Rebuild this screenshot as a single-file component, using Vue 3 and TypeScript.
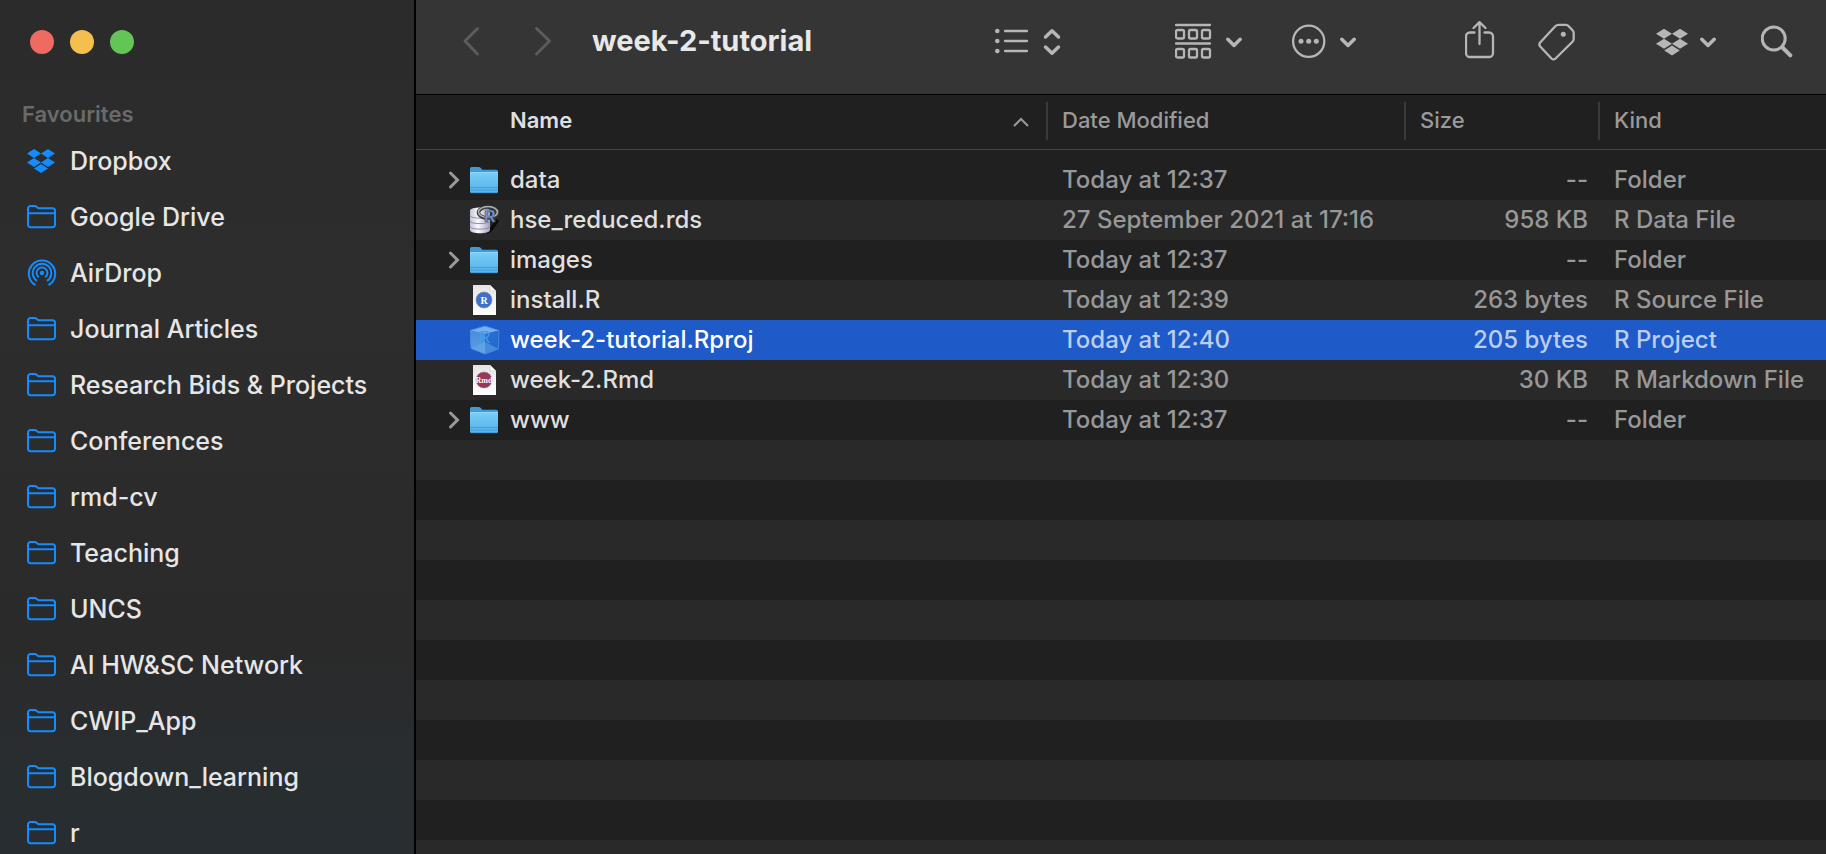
<script setup lang="ts">
import { ref } from 'vue'

type IconName = 'dropbox' | 'folder' | 'airdrop'
type FileIcon = 'folder' | 'rdata' | 'rsource' | 'rproj' | 'rmd'

interface Favourite {
  label: string
  icon: IconName
}

interface FileRow {
  name: string
  icon: FileIcon
  modified: string
  size: string
  kind: string
}

const favourites: Favourite[] = [
  { label: 'Dropbox', icon: 'dropbox' },
  { label: 'Google Drive', icon: 'folder' },
  { label: 'AirDrop', icon: 'airdrop' },
  { label: 'Journal Articles', icon: 'folder' },
  { label: 'Research Bids & Projects', icon: 'folder' },
  { label: 'Conferences', icon: 'folder' },
  { label: 'rmd-cv', icon: 'folder' },
  { label: 'Teaching', icon: 'folder' },
  { label: 'UNCS', icon: 'folder' },
  { label: 'AI HW&SC Network', icon: 'folder' },
  { label: 'CWIP_App', icon: 'folder' },
  { label: 'Blogdown_learning', icon: 'folder' },
  { label: 'r', icon: 'folder' },
]

const files: FileRow[] = [
  { name: 'data', icon: 'folder', modified: 'Today at 12:37', size: '--', kind: 'Folder' },
  { name: 'hse_reduced.rds', icon: 'rdata', modified: '27 September 2021 at 17:16', size: '958 KB', kind: 'R Data File' },
  { name: 'images', icon: 'folder', modified: 'Today at 12:37', size: '--', kind: 'Folder' },
  { name: 'install.R', icon: 'rsource', modified: 'Today at 12:39', size: '263 bytes', kind: 'R Source File' },
  { name: 'week-2-tutorial.Rproj', icon: 'rproj', modified: 'Today at 12:40', size: '205 bytes', kind: 'R Project' },
  { name: 'week-2.Rmd', icon: 'rmd', modified: 'Today at 12:30', size: '30 KB', kind: 'R Markdown File' },
  { name: 'www', icon: 'folder', modified: 'Today at 12:37', size: '--', kind: 'Folder' },
]

const selected = ref('week-2-tutorial.Rproj')
</script>

<template>
  <div class="window">
    <svg class="defs" aria-hidden="true">
      <defs>
        <linearGradient id="folder-front" x1="0" y1="0" x2="0" y2="1">
          <stop offset="0" stop-color="#7acdf8" />
          <stop offset="1" stop-color="#54b2ea" />
        </linearGradient>
        <linearGradient id="drum" x1="0" y1="0" x2="1" y2="0">
          <stop offset="0" stop-color="#c4c4d6" />
          <stop offset="0.4" stop-color="#fafaff" />
          <stop offset="1" stop-color="#a0a0bc" />
        </linearGradient>
        <linearGradient id="paper" x1="0" y1="0" x2="0" y2="1">
          <stop offset="0" stop-color="#e4e4e4" />
          <stop offset="1" stop-color="#ffffff" />
        </linearGradient>
        <linearGradient id="cube-left" x1="0" y1="0" x2="0" y2="1">
          <stop offset="0" stop-color="#4a8edc" />
          <stop offset="1" stop-color="#5b9fe3" />
        </linearGradient>
        <linearGradient id="cube-right" x1="0" y1="0" x2="1" y2="1">
          <stop offset="0" stop-color="#2a6fd0" />
          <stop offset="1" stop-color="#2468cc" />
        </linearGradient>
      </defs>
    </svg>

    <aside class="sidebar">
      <div class="lights">
        <button class="light close" aria-label="Close"></button>
        <button class="light minimise" aria-label="Minimise"></button>
        <button class="light zoom" aria-label="Zoom"></button>
      </div>
      <h2 class="section">Favourites</h2>
      <nav class="favourites">
        <a v-for="item in favourites" :key="item.label" class="favourite" href="#">
          <svg v-if="item.icon === 'dropbox'" class="side-icon" viewBox="0 0 30 28" aria-hidden="true">
            <path
              fill="#148cff"
              d="M7 2l7 4.5-7 4.5-7-4.5zM21 2l7 4.5-7 4.5-7-4.5zM7 11l7 4.5L7 20l-7-4.5zM21 11l7 4.5-7 4.5-7-4.5zM14 17l7 4.5-7 4.5-7-4.5z"
            />
          </svg>
          <svg v-else-if="item.icon === 'folder'" class="side-icon outline" viewBox="0 0 30 28" aria-hidden="true">
            <path d="M1 8.500V5.500a2.500 2.500 0 0 1 2.500-2.500h4.500c1.500 0 2.200 2.300 4 2.300h13.500a2.500 2.500 0 0 1 2.500 2.500v14a2.500 2.500 0 0 1-2.500 2.500h-22a2.500 2.500 0 0 1-2.500-2.500zM1 10.300h27" />
          </svg>
          <svg v-else class="side-icon outline" viewBox="0 0 30 28" aria-hidden="true">
            <circle cx="15" cy="14" r="1.200" fill="#148cff" />
            <path d="M8.500 26.200a13.200 13.200 0 1 1 13 0M10 21.800a9.300 9.300 0 1 1 10 0M11.800 18.300a5.400 5.400 0 1 1 6.400 0" />
          </svg>
          <span>{{ item.label }}</span>
        </a>
      </nav>
    </aside>

    <main class="content">
      <header class="toolbar">
        <button class="tool nav back" aria-label="Back">
          <svg width="18" height="40" viewBox="0 0 18 40"><path d="M15.500 7.500L3 20l12.500 13" /></svg>
        </button>
        <button class="tool nav forward" aria-label="Forward">
          <svg width="18" height="40" viewBox="0 0 18 40"><path d="M2.500 7.500L15.500 20 2.500 33" /></svg>
        </button>
        <h1 class="title">week-2-tutorial</h1>

        <button class="tool view" aria-label="List view">
          <svg width="66" height="40" viewBox="0 0 66 40">
            <path class="medium" d="M10 10h22M10 20h22M10 30h22" />
            <g class="solid"><circle cx="2.300" cy="10" r="2.300" /><circle cx="2.300" cy="20" r="2.300" /><circle cx="2.300" cy="30" r="2.300" /></g>
            <path class="heavy" d="M50.500 16L57 9.800l6.500 6.200M50.500 26L57 32.200l6.500-6.200" />
          </svg>
        </button>
        <button class="tool group" aria-label="Group items">
          <svg width="68" height="40" viewBox="0 0 68 40">
            <path class="medium" d="M1 4h34M1 22.500h34" />
            <g class="medium">
              <rect x="1" y="9" width="8" height="8.500" rx="1.500" /><rect x="14" y="9" width="8" height="8.500" rx="1.500" /><rect x="27" y="9" width="8" height="8.500" rx="1.500" />
              <rect x="1" y="28" width="8" height="8.500" rx="1.500" /><rect x="14" y="28" width="8" height="8.500" rx="1.500" /><rect x="27" y="28" width="8" height="8.500" rx="1.500" />
            </g>
            <path class="heavy" d="M52.800 18.300L59 24.500l6.200-6.200" />
          </svg>
        </button>
        <button class="tool action" aria-label="Actions">
          <svg width="64" height="40" viewBox="0 0 64 40">
            <circle class="medium" cx="16.700" cy="20.300" r="15.600" />
            <g class="solid"><circle cx="9" cy="20.300" r="2.500" /><circle cx="16.700" cy="20.300" r="2.500" /><circle cx="24.300" cy="20.300" r="2.500" /></g>
            <path class="heavy" d="M49.800 18.300L56 24.500l6.200-6.200" />
          </svg>
        </button>
        <button class="tool share" aria-label="Share">
          <svg width="30" height="40" viewBox="0 0 30 40">
            <path class="medium" d="M9.500 11.500H5a4 4 0 0 0-4 4V32a4 4 0 0 0 4 4h19a4 4 0 0 0 4-4V15.500a4 4 0 0 0-4-4h-4.500M14.500 23V1.500M8.500 7l6-5.800 6 5.800" />
          </svg>
        </button>
        <button class="tool tag" aria-label="Tags">
          <svg width="38" height="40" viewBox="0 0 38 40">
            <path class="medium" d="M17.500 5Q18.700 3.800 20.500 3.800H28Q29.500 3.800 30.500 5L34.500 9.200Q35.700 10.500 35.700 12V18Q35.700 19.500 34.500 20.700L17.500 37.500Q15.500 39.300 13.500 37.500L2.200 25.500Q0.500 23.500 2.200 21.600Z" />
            <circle class="solid" cx="25.300" cy="13.300" r="2.500" />
          </svg>
        </button>
        <button class="tool dropbox" aria-label="Dropbox">
          <svg width="60" height="40" viewBox="0 0 60 40">
            <path
              class="solid"
              d="M8 7.800l8 5-8 5-8-5zM24 7.800l8 5-8 5-8-5zM8 17.800l8 5-8 5-8-5zM24 17.800l8 5-8 5-8-5zM16 24.600l7.800 5-7.800 5-7.800-5z"
            />
            <path class="heavy" d="M45.800 18.300L52 24.500l6.200-6.200" />
          </svg>
        </button>
        <button class="tool search" aria-label="Search">
          <svg width="32" height="40" viewBox="0 0 32 40">
            <circle class="glass" cx="12.700" cy="17.500" r="11.500" />
            <path class="handle" d="M21.500 26.500l7.800 7.800" />
          </svg>
        </button>
      </header>

      <table class="files">
        <colgroup>
          <col />
          <col class="col-date" />
          <col class="col-size" />
          <col class="col-kind" />
        </colgroup>
        <thead>
          <tr>
            <th scope="col" class="sorted" aria-sort="ascending">
              <div class="head">
                <span>Name</span>
                <svg width="18" height="12" viewBox="0 0 18 12" aria-hidden="true"><path d="M2 11l7-7 7 7" /></svg>
              </div>
            </th>
            <th scope="col"><div class="head">Date Modified</div></th>
            <th scope="col"><div class="head">Size</div></th>
            <th scope="col"><div class="head">Kind</div></th>
          </tr>
        </thead>
        <tbody>
          <tr v-for="file in files" :key="file.name" :class="{ selected: file.name === selected }" @click="selected = file.name">
            <td>
              <div class="name">
                <button v-if="file.icon === 'folder'" class="disclosure" :aria-label="'Expand ' + file.name">
                  <svg width="16" height="24" viewBox="0 0 16 24"><path d="M4.500 5l7 7-7 7" /></svg>
                </button>
                <span v-else class="disclosure"></span>
                <svg class="file-icon" viewBox="0 0 30 30" aria-hidden="true">
                  <template v-if="file.icon === 'folder'">
                    <path fill="#3d9bd6" d="M0 3.500Q0 2 1.500 2H8.500Q10 2 11 3.200L12.500 4.700H26.500Q28 4.700 28 6.200V12H0z" />
                    <path fill="url(#folder-front)" d="M0 7.500H28V26.500Q28 28 26.500 28H1.500Q0 28 0 26.500z" />
                    <path stroke="#8fd8fb" d="M0 7.500h28" />
                    <path stroke="#3f97d0" stroke-width="0.800" d="M0 22.500h28M0 25h28M1 27.700h26" />
                  </template>
                  <template v-else-if="file.icon === 'rdata'">
                    <path fill="#050505" opacity="0.850" d="M17 26L27 14l2 2-7 10-5 3z" />
                    <path fill="url(#drum)" d="M0 5.500C0 1.500 20 1.500 20 5.500V25C20 29.300 0 29.300 0 25z" />
                    <path fill="none" stroke="#8d8da6" d="M0 10.500c0 3.500 20 3.500 20 0M0 16c0 3.500 20 3.500 20 0M0 21.500c0 3.500 20 3.500 20 0" />
                    <ellipse cx="18" cy="7.500" rx="9.500" ry="5.500" fill="none" stroke="#383b3e" stroke-width="3.600" />
                    <ellipse cx="18" cy="7" rx="9.500" ry="5.500" fill="none" stroke="#aeb2b3" stroke-width="1.600" />
                    <text x="14" y="16.500" class="glyph" font-size="16" fill="#7f98cf" stroke="#42557f" stroke-width="0.600">R</text>
                  </template>
                  <template v-else-if="file.icon === 'rproj'">
                    <path fill="#77b0ec" d="M15 1L29 5.500 15 9 0 5.500z" />
                    <path fill="url(#cube-left)" d="M0 5.500L15 9V29L1 23.500z" />
                    <path fill="url(#cube-right)" d="M29 5.500L15 9V29l13.500-5z" />
                    <path fill="#69abe8" d="M15 17l13.500 7L15 29 1 23.500z" opacity="0.500" />
                    <path fill="none" stroke="#4590e4" stroke-width="0.800" d="M15 1L29 5.500 28.500 24 15 29 1 23.500 0 5.500z" />
                    <text x="9" y="18" class="glyph light-glyph" font-size="16" fill="#35a2f2">R</text>
                  </template>
                  <template v-else>
                    <path fill="url(#paper)" d="M3 0H20L26 6V30H3z" />
                    <path fill="#ffffff" stroke="#c4c4c4" stroke-width="0.600" d="M20 0V6H26z" />
                    <circle cx="14" cy="15" r="8" :fill="file.icon === 'rmd' ? '#9c3558' : '#3b70cf'" stroke="#8a8a96" stroke-width="0.600" />
                    <text v-if="file.icon === 'rmd'" x="14" y="17.500" class="glyph serif" font-size="8" text-anchor="middle" fill="#ffffff">Rmd</text>
                    <text v-else x="14" y="18.500" class="glyph serif" font-size="10" text-anchor="middle" fill="#ffffff">R</text>
                  </template>
                </svg>
                <span>{{ file.name }}</span>
              </div>
            </td>
            <td>{{ file.modified }}</td>
            <td class="size">{{ file.size }}</td>
            <td>{{ file.kind }}</td>
          </tr>
        </tbody>
      </table>
      <div class="empty-rows"></div>
    </main>
  </div>
</template>

<style>
body {
  margin: 0;
  background: #202020;
}
</style>

<style scoped>
.window {
  display: flex;
  height: 100vh;
  overflow: hidden;
  font-family: Inter, "Liberation Sans", sans-serif;
  color: #dfdfdf;
}

.defs {
  position: absolute;
  width: 0;
  height: 0;
}

button {
  padding: 0;
  border: 0;
  background: none;
  color: inherit;
}

svg {
  display: block;
  flex: none;
}

.sidebar {
  box-sizing: border-box;
  flex: none;
  width: 416px;
  border-right: 2px solid #000;
  background: linear-gradient(#2b2b2b 0, #2d2d2d 35%, #2a2a2a 76%, #292d30 88%, #272d30 100%);
  overflow: hidden;
}

.lights {
  display: flex;
  gap: 16px;
  padding: 30px 30px 0;
}

.light {
  width: 24px;
  height: 24px;
  border-radius: 50%;
}

.close {
  background: #ed6b60;
}

.minimise {
  background: #f5bf4f;
}

.zoom {
  background: #62c555;
}

.section {
  margin: 44px 0 3px 22px;
  font-size: 22px;
  line-height: 32px;
  font-weight: 600;
  color: #6a6a6a;
}

.favourite {
  display: flex;
  align-items: center;
  gap: 13px;
  height: 56px;
  padding-left: 27px;
  font-size: 25px;
  font-weight: 500;
  color: #e6e6e6;
  text-decoration: none;
  white-space: nowrap;
}

.side-icon {
  width: 30px;
  height: 28px;
}

.outline {
  fill: none;
  stroke: #148cff;
  stroke-width: 2;
}

.content {
  flex: 1;
  min-width: 0;
  display: flex;
  flex-direction: column;
  background: #202020;
}

.toolbar {
  box-sizing: border-box;
  display: flex;
  align-items: center;
  flex: none;
  height: 95px;
  padding: 0 33px 12px 46px;
  border-bottom: 1px solid #000;
  background: #353535;
}

.tool svg {
  fill: none;
  stroke: #b6b6b6;
  stroke-linecap: round;
  stroke-linejoin: round;
}

.nav svg {
  stroke: #5c5c5c;
  stroke-width: 3;
}

.forward {
  margin-left: 54px;
}

.medium {
  stroke-width: 2.3;
}

.heavy {
  stroke-width: 3.5;
}

.glass {
  stroke-width: 3;
}

.handle {
  stroke-width: 4;
}

.solid {
  fill: #b6b6b6;
  stroke: none;
}

.title {
  flex: 1;
  margin: 0 0 0 40px;
  font-size: 29px;
  line-height: 40px;
  font-weight: 700;
  color: #e8e8e8;
  white-space: nowrap;
}

.group {
  margin-left: 114px;
}

.action {
  margin-left: 49px;
}

.share {
  margin-left: 109px;
}

.tag {
  margin-left: 43px;
}

.dropbox {
  margin-left: 80px;
}

.search {
  margin-left: 45px;
}

.files {
  flex: none;
  width: 100%;
  table-layout: fixed;
  border-collapse: collapse;
  font-size: 24px;
  font-weight: 450;
}

.col-date {
  width: 358px;
}

.col-size {
  width: 194px;
}

.col-kind {
  width: 228px;
}

th {
  height: 54px;
  padding: 0;
  border-bottom: 1px solid #454545;
  font-size: 22px;
  font-weight: 500;
  text-align: left;
  color: #9a9a9a;
}

.head {
  display: flex;
  align-items: center;
  justify-content: space-between;
  height: 38px;
  margin-bottom: 2px;
  padding-left: 14px;
  border-left: 2px solid #3a3a3a;
  line-height: 36px;
  align-items: flex-start;
}

.sorted .head {
  padding: 0 16px 0 94px;
  border-left: 0;
  font-weight: 600;
  color: #dfdfdf;
}

.head svg {
  align-self: center;
  fill: none;
  stroke: #9a9a9a;
  stroke-width: 2;
}

tbody::before {
  content: "";
  display: block;
  height: 10px;
}

td {
  height: 40px;
  padding: 0 0 0 16px;
  line-height: 38px;
  color: #989898;
  white-space: nowrap;
}

td:first-child {
  padding-left: 30px;
  color: #dfdfdf;
}

td.size {
  padding: 0 10px 0 0;
  text-align: right;
}

tbody tr:nth-child(even) {
  background: #292929;
}

tbody tr.selected {
  background: #1e5ac8;
}

.selected td {
  color: #bccdee;
}

.selected td:first-child {
  color: #fff;
}

.name {
  display: flex;
  align-items: center;
}

.disclosure {
  width: 16px;
  margin-right: 8px;
}

.disclosure svg {
  fill: none;
  stroke: #9a9a9a;
  stroke-width: 3;
  stroke-linecap: round;
}

.file-icon {
  width: 30px;
  height: 30px;
  margin-right: 10px;
}

.glyph {
  font-family: "Liberation Sans", sans-serif;
  font-weight: 700;
}

.light-glyph {
  font-weight: 400;
}

.serif {
  font-family: "Liberation Serif", serif;
}

.empty-rows {
  flex: 1;
  background: repeating-linear-gradient(#292929 0 40px, #202020 40px 80px);
}
</style>
